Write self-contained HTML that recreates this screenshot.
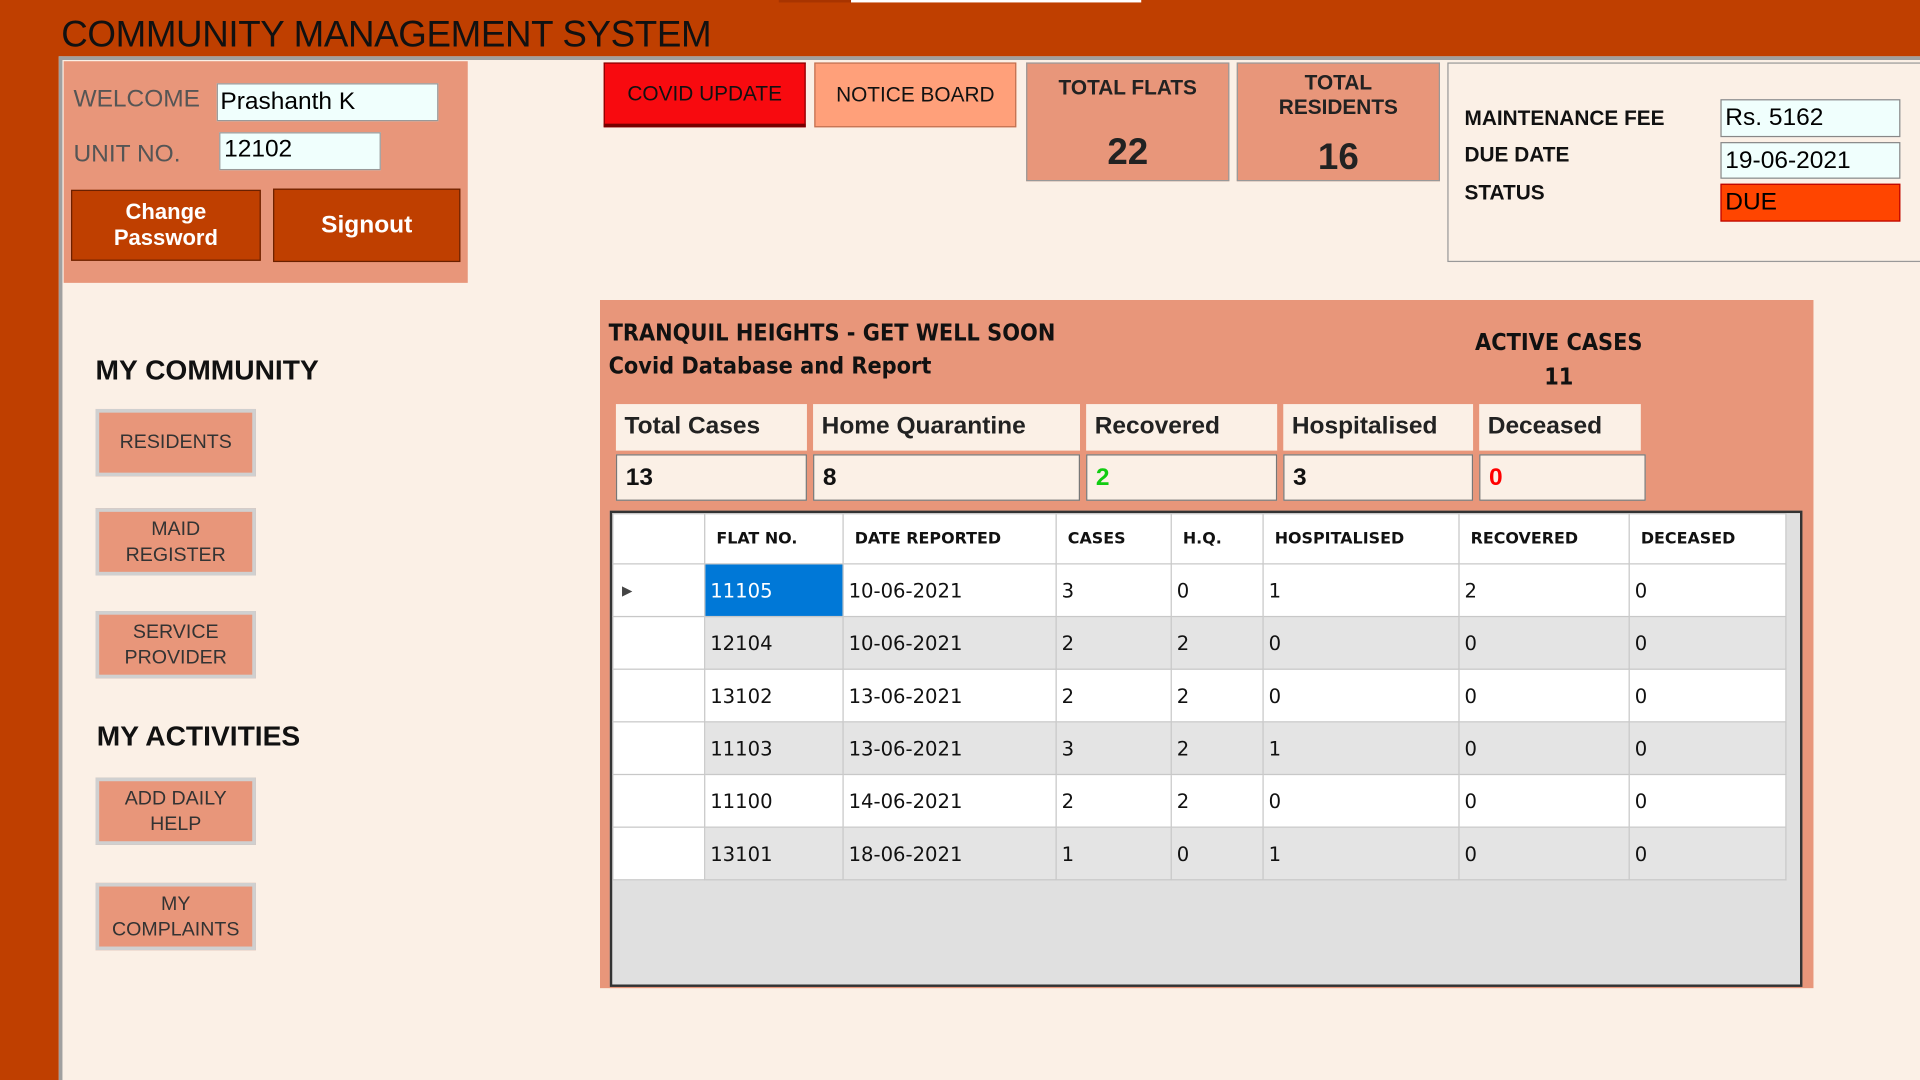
<!DOCTYPE html>
<html><head><meta charset="utf-8"><style>
html,body{margin:0;padding:0;width:1920px;height:1080px;overflow:hidden;background:#bf3f00}
#s{position:absolute;left:0;top:0;width:1568px;height:882px;transform:scale(1.22449);transform-origin:0 0;font-family:"Liberation Sans",sans-serif}
.a{position:absolute;box-sizing:border-box}
.btn{display:flex;align-items:center;justify-content:center;text-align:center}
.side{background:#e8967a;border:3px solid #d0d0d0;color:#333;font-size:16px;line-height:21px;width:131px;height:55px;left:78px}
.hd{background:#fbf0e6;font-size:20px;font-weight:bold;color:#222;padding:7px 7px;height:38px;top:330px}
.vl{background:#fbf0e6;border:1px solid #777;font-size:20px;font-weight:bold;color:#111;padding:7px 7px;height:38px;top:371px}
.lbl{font-size:17px;font-weight:bold;color:#111;left:1196px}
.inp{left:1405px;width:147px;height:31px;background:#f0fffd;border:1px solid #888;font-size:20px;padding:3px 3px}
table{border-collapse:collapse;font-family:"DejaVu Sans",sans-serif;font-size:16px;color:#111}
td{border:1px solid #c8c8c8;height:43px;padding:0 0 0 4px;box-sizing:border-box}
th{border:1px solid #c8c8c8;height:41px;font-size:13px;font-weight:bold;text-align:left;padding:0 0 0 9px;background:#fff;box-sizing:border-box}
tr.g td{background:#e4e4e4}
tr.w td{background:#fff}
</style></head><body><div id="s">
<div class="a" style="left:636px;top:0;width:59px;height:2px;background:#a83400"></div>
<div class="a" style="left:695px;top:0;width:237px;height:2px;background:#fff"></div>
<div class="a" style="left:50px;top:12px;font-size:30px;color:#111;letter-spacing:-0.3px">COMMUNITY MANAGEMENT SYSTEM</div>
<div class="a" style="left:48px;top:46px;width:1520px;height:836px;background:#fbf0e6;border-top:3px solid #a0a0a0;border-left:3px solid #a0a0a0"></div>
<div class="a" style="left:52px;top:50px;width:330px;height:181px;background:#e8967a"></div>
<div class="a" style="left:60px;top:70px;font-size:20px;color:#555">WELCOME</div>
<div class="a" style="left:177px;top:68px;width:181px;height:31px;background:#f0fffd;border:1px solid #999;font-size:20px;padding:3px 2px">Prashanth K</div>
<div class="a" style="left:60px;top:115px;font-size:20px;color:#555">UNIT NO.</div>
<div class="a" style="left:179px;top:108px;width:132px;height:31px;background:#f0fffd;border:1px solid #999;font-size:20px;padding:2px 3px">12102</div>
<div class="a btn" style="left:58px;top:155px;width:155px;height:58px;background:#bf3f00;border:1px solid #6a2000;color:#fff;font-weight:bold;font-size:18px;line-height:21px">Change<br>Password</div>
<div class="a btn" style="left:223px;top:154px;width:153px;height:60px;background:#bf3f00;border:1px solid #6a2000;color:#fff;font-weight:bold;font-size:20px">Signout</div>
<div class="a btn" style="left:493px;top:51px;width:165px;height:53px;background:#f80a0f;border:1px solid #800;border-bottom:3px solid #700;font-size:17px;color:#111">COVID UPDATE</div>
<div class="a btn" style="left:665px;top:51px;width:165px;height:53px;background:#ffa07a;border:1px solid #c07050;font-size:17px;color:#111">NOTICE BOARD</div>
<div class="a" style="left:838px;top:51px;width:166px;height:97px;background:#e8967a;border:1px solid #999;text-align:center;color:#222"><div style="font-size:17px;font-weight:bold;margin-top:10px">TOTAL FLATS</div><div style="font-size:30px;font-weight:bold;margin-top:28px;line-height:30px">22</div></div>
<div class="a" style="left:1010px;top:51px;width:166px;height:97px;background:#e8967a;border:1px solid #999;text-align:center;color:#222"><div style="font-size:17px;font-weight:bold;margin-top:6px;line-height:20px">TOTAL<br>RESIDENTS</div><div style="font-size:30px;font-weight:bold;margin-top:16px;line-height:30px">16</div></div>
<div class="a" style="left:1182px;top:51px;width:390px;height:163px;border:1px solid #999;background:#fbf0e6"></div>
<div class="a lbl" style="top:87px">MAINTENANCE FEE</div>
<div class="a lbl" style="top:117px">DUE DATE</div>
<div class="a lbl" style="top:148px">STATUS</div>
<div class="a inp" style="top:81px">Rs. 5162</div>
<div class="a inp" style="top:116px;height:30px">19-06-2021</div>
<div class="a inp" style="top:150px;background:#ff4500;border-color:#b00">DUE</div>
<div class="a" style="left:78px;top:289px;font-size:23px;font-weight:bold;color:#111">MY COMMUNITY</div>
<div class="a btn side" style="top:334px">RESIDENTS</div>
<div class="a btn side" style="top:415px">MAID<br>REGISTER</div>
<div class="a btn side" style="top:499px">SERVICE<br>PROVIDER</div>
<div class="a" style="left:79px;top:588px;font-size:23px;font-weight:bold;color:#111">MY ACTIVITIES</div>
<div class="a btn side" style="top:635px">ADD DAILY<br>HELP</div>
<div class="a btn side" style="top:721px">MY<br>COMPLAINTS</div>
<div class="a" style="left:490px;top:245px;width:991px;height:562px;background:#e8967a"></div>
<div class="a" style="left:497px;top:259px;font-size:19px;font-weight:bold;color:#111;font-family:'DejaVu Sans Condensed','DejaVu Sans',sans-serif;line-height:27px">TRANQUIL HEIGHTS - GET WELL SOON<br>Covid Database and Report</div>
<div class="a" style="left:1183px;top:266px;width:180px;text-align:center;font-size:19px;font-weight:bold;color:#111;font-family:'DejaVu Sans Condensed','DejaVu Sans',sans-serif;line-height:28px">ACTIVE CASES<br>11</div>
<div class="a" style="left:501px;top:329px;width:847px;height:84px;background:#e8967a"></div>
<div class="a hd" style="left:503px;width:156px">Total Cases</div>
<div class="a hd" style="left:664px;width:218px">Home Quarantine</div>
<div class="a hd" style="left:887px;width:156px">Recovered</div>
<div class="a hd" style="left:1048px;width:155px">Hospitalised</div>
<div class="a hd" style="left:1208px;width:132px">Deceased</div>
<div class="a vl" style="left:503px;width:156px">13</div>
<div class="a vl" style="left:664px;width:218px">8</div>
<div class="a vl" style="left:887px;width:156px;color:#1c1">2</div>
<div class="a vl" style="left:1048px;width:155px">3</div>
<div class="a vl" style="left:1208px;width:136px;color:#f00">0</div>
<div class="a" style="left:498px;top:417px;width:974px;height:389px;background:#e0e0e0;border:2px solid #333;overflow:hidden">
<table style="position:absolute;left:0;top:0;table-layout:fixed;width:958px">
<colgroup><col style="width:75px"><col style="width:113px"><col style="width:174px"><col style="width:94px"><col style="width:75px"><col style="width:160px"><col style="width:139px"><col style="width:128px"></colgroup>
<tr><th></th><th>FLAT NO.</th><th>DATE REPORTED</th><th>CASES</th><th>H.Q.</th><th>HOSPITALISED</th><th>RECOVERED</th><th>DECEASED</th></tr>
<tr class="w"><td style="font-size:11px;padding-left:7px;color:#444">&#9654;</td><td style="background:#0078d7;color:#fff">11105</td><td>10-06-2021</td><td>3</td><td>0</td><td>1</td><td>2</td><td>0</td></tr>
<tr class="g"><td style="background:#fff"></td><td>12104</td><td>10-06-2021</td><td>2</td><td>2</td><td>0</td><td>0</td><td>0</td></tr>
<tr class="w"><td></td><td>13102</td><td>13-06-2021</td><td>2</td><td>2</td><td>0</td><td>0</td><td>0</td></tr>
<tr class="g"><td style="background:#fff"></td><td>11103</td><td>13-06-2021</td><td>3</td><td>2</td><td>1</td><td>0</td><td>0</td></tr>
<tr class="w"><td></td><td>11100</td><td>14-06-2021</td><td>2</td><td>2</td><td>0</td><td>0</td><td>0</td></tr>
<tr class="g"><td style="background:#fff"></td><td>13101</td><td>18-06-2021</td><td>1</td><td>0</td><td>1</td><td>0</td><td>0</td></tr>
</table></div>
</div></body></html>
